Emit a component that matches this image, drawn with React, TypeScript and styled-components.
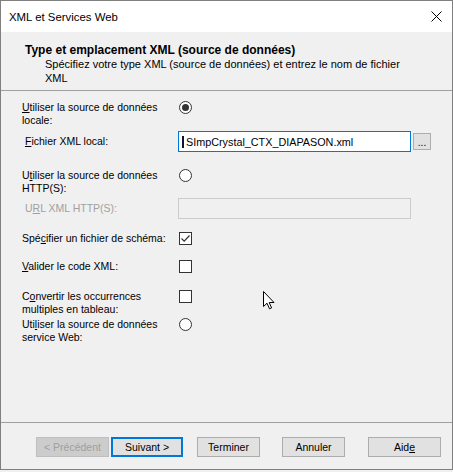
import * as React from "react";
import styled, { createGlobalStyle } from "styled-components";

const GlobalStyle = createGlobalStyle`
    body {
        margin: 0;
        background: #f0f0f0;
        font-family: "Liberation Sans", Arial, sans-serif;
    }
`;

const Window = styled.div`
    position: relative;
    width: 453px;
    height: 470px;
    box-sizing: border-box;
    border: 1px solid #7f7f7f;
    background: #f0f0f0;
    display: flex;
    flex-direction: column;
    color: #000;
    font-size: 10.5px;
`;

const TitleBar = styled.div`
    height: 31px;
    flex-shrink: 0;
    background: #fff;
    display: flex;
    align-items: center;
    justify-content: space-between;
    padding: 0 10px 0 8px;
    font-size: 11.4px;
`;

const Header = styled.div`
    height: 59px;
    flex-shrink: 0;
    box-sizing: border-box;
    border-bottom: 1px solid #a0a0a0;
    padding: 11px 0 0 24px;
    line-height: 14px;
`;

const HeaderTitle = styled.div`
    font-weight: bold;
    font-size: 12px;
`;

const HeaderText = styled.div`
    padding-left: 20px;
    font-size: 11px;
`;

const Body = styled.div`
    flex: 1;
    padding: 10px 0 0 21px;
`;

const Row = styled.div<{ $mt: number; $center?: boolean }>`
    display: grid;
    grid-template-columns: 156px auto;
    align-items: ${p => (p.$center ? "center" : "start")};
    margin-top: ${p => p.$mt}px;
`;

const Label = styled.div<{ $indent?: number; $disabled?: boolean }>`
    line-height: 13px;
    padding-left: ${p => p.$indent || 0}px;
    color: ${p => (p.$disabled ? "#a0a0a0" : "#000")};
`;

const Key = styled.span`
    text-decoration: underline;
`;

const Radio = styled.span<{ $checked?: boolean }>`
    display: flex;
    align-items: center;
    justify-content: center;
    width: 13px;
    height: 13px;
    margin-left: 1px;
    box-sizing: border-box;
    border: 1px solid #333;
    border-radius: 50%;
    background: #fff;
    &::after {
        content: "";
        display: ${p => (p.$checked ? "block" : "none")};
        width: 7px;
        height: 7px;
        border-radius: 50%;
        background: #333;
    }
`;

const CheckBox = styled.span`
    display: flex;
    align-items: center;
    justify-content: center;
    width: 13px;
    height: 13px;
    margin-left: 1px;
    box-sizing: border-box;
    border: 1px solid #333;
    background: #fff;
`;

const Field = styled.div`
    display: flex;
    align-items: center;
    gap: 2px;
`;

const TextInput = styled.div<{ $disabled?: boolean }>`
    width: 233px;
    height: 21px;
    box-sizing: border-box;
    border: 1px solid ${p => (p.$disabled ? "#cccccc" : "#0078d7")};
    background: ${p => (p.$disabled ? "#f0f0f0" : "#fff")};
    display: flex;
    align-items: center;
    padding-left: 3px;
    white-space: nowrap;
    overflow: hidden;
    font-size: 10.8px;
`;

const Caret = styled.span`
    display: inline-block;
    width: 2px;
    height: 12px;
    margin-right: 2px;
    background: #111133;
`;

const BrowseButton = styled.div`
    width: 18px;
    height: 17px;
    box-sizing: border-box;
    border: 1px solid #adadad;
    background: #e1e1e1;
    display: flex;
    align-items: flex-end;
    justify-content: center;
    line-height: 12px;
    font-size: 10px;
`;

const Footer = styled.div`
    height: 47px;
    flex-shrink: 0;
    box-sizing: border-box;
    border-top: 1px solid #a0a0a0;
    padding: 14px 0 0 35px;
    display: flex;
    align-items: flex-start;
`;

const Button = styled.div<{ $w: number; $ml: number; $default?: boolean; $disabled?: boolean }>`
    width: ${p => p.$w}px;
    height: 20px;
    margin-left: ${p => p.$ml}px;
    box-sizing: border-box;
    display: flex;
    align-items: center;
    justify-content: center;
    border: ${p => (p.$default ? "2px solid #0078d7" : p.$disabled ? "1px solid #bfbfbf" : "1px solid #adadad")};
    background: ${p => (p.$disabled ? "#cccccc" : "#e1e1e1")};
    color: ${p => (p.$disabled ? "#a0a0a0" : "#000")};
`;

const Cursor = styled.svg`
    position: absolute;
    left: 262px;
    top: 290px;
`;

const CloseIcon = () => (
    <svg width="11" height="11" viewBox="0 0 11 11">
        <path d="M0.5 0.5 L10.5 10.5 M10.5 0.5 L0.5 10.5" stroke="#000" strokeWidth="1" fill="none" />
    </svg>
);

const CheckMark = () => (
    <svg width="11" height="11" viewBox="0 0 11 11">
        <path d="M1.5 5.5 L4.2 8.2 L9.5 2.5" stroke="#333" strokeWidth="1.2" fill="none" />
    </svg>
);

const App: React.FC = () => {
    return (
        <>
            <GlobalStyle />
            <Window>
                <TitleBar>
                    <span>XML et Services Web</span>
                    <CloseIcon />
                </TitleBar>
                <Header>
                    <HeaderTitle>Type et emplacement XML (source de données)</HeaderTitle>
                    <HeaderText>
                        Spécifiez votre type XML (source de données) et entrez le nom de fichier<br />XML
                    </HeaderText>
                </Header>
                <Body>
                    <Row $mt={0}>
                        <Label><Key>U</Key>tiliser la source de données<br />locale:</Label>
                        <Radio $checked />
                    </Row>
                    <Row $mt={4} $center>
                        <Label $indent={3}><Key>F</Key>ichier XML local:</Label>
                        <Field>
                            <TextInput>
                                <Caret />SImpCrystal_CTX_DIAPASON.xml
                            </TextInput>
                            <BrowseButton>...</BrowseButton>
                        </Field>
                    </Row>
                    <Row $mt={17}>
                        <Label>U<Key>t</Key>iliser la source de données<br />HTTP(S):</Label>
                        <Radio />
                    </Row>
                    <Row $mt={3} $center>
                        <Label $indent={3} $disabled>U<Key>R</Key>L XML HTTP(S):</Label>
                        <TextInput $disabled />
                    </Row>
                    <Row $mt={13}>
                        <Label>Spé<Key>c</Key>ifier un fichier de schéma:</Label>
                        <CheckBox><CheckMark /></CheckBox>
                    </Row>
                    <Row $mt={15}>
                        <Label><Key>V</Key>alider le code XML:</Label>
                        <CheckBox />
                    </Row>
                    <Row $mt={17}>
                        <Label>C<Key>o</Key>nvertir les occurrences<br />multiples en tableau:</Label>
                        <CheckBox />
                    </Row>
                    <Row $mt={2}>
                        <Label>Uti<Key>l</Key>iser la source de données<br />service Web:</Label>
                        <Radio />
                    </Row>
                </Body>
                <Footer>
                    <Button $w={73} $ml={0} $disabled>&lt; Précédent</Button>
                    <Button $w={72} $ml={2} $default>Suivant &gt;</Button>
                    <Button $w={63} $ml={14}>Terminer</Button>
                    <Button $w={63} $ml={22}>Annuler</Button>
                    <Button $w={73} $ml={23}>Aid<Key>e</Key></Button>
                </Footer>
                <Cursor width="13" height="20" viewBox="0 0 13 20">
                    <path d="M0.5 0.5 V15.5 L4 12.2 L6.5 17.8 L8.6 16.9 L6.2 11.5 H11 Z" fill="#fff" stroke="#000" strokeWidth="1" strokeLinejoin="miter" />
                </Cursor>
            </Window>
        </>
    );
};

export default App;
